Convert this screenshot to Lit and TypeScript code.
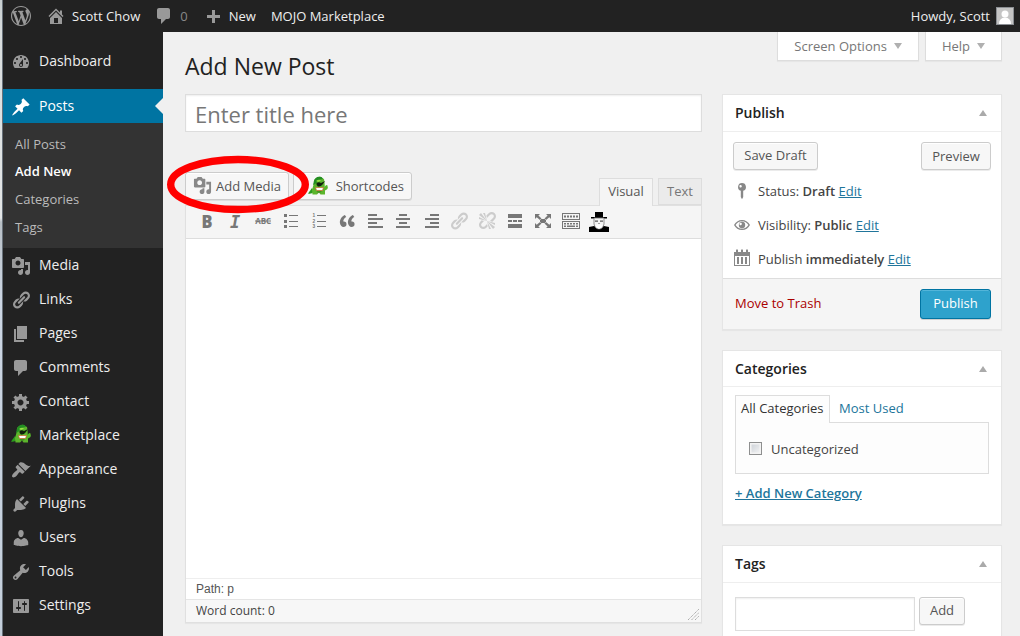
import { LitElement, html, css, svg } from "lit";
import { customElement, property } from "lit/decorators.js";

const paths: Record<string, string> = {
  wordpress: "M20 10c0-5.51-4.49-10-10-10C4.48 0 0 4.49 0 10c0 5.52 4.48 10 10 10 5.51 0 10-4.48 10-10zM7.78 15.37L4.37 6.22c.55-.02 1.17-.08 1.17-.08.5-.06.44-1.13-.06-1.11 0 0-1.45.11-2.37.11-.18 0-.37 0-.58-.01C4.12 2.69 6.87 1.11 10 1.11c2.33 0 4.45.87 6.05 2.34-.68-.11-1.65.39-1.65 1.58 0 .74.45 1.36.9 2.1.35.61.55 1.36.55 2.46 0 1.49-1.4 5-1.4 5l-3.03-8.37c.54-.02.82-.17.82-.17.5-.05.44-1.25-.06-1.22 0 0-1.44.12-2.38.12-.87 0-2.33-.12-2.33-.12-.5-.03-.56 1.2-.06 1.22l.92.08 1.26 3.41zM17.41 10c.24-.64.74-1.87.43-4.25.7 1.29 1.05 2.71 1.05 4.25 0 3.29-1.73 6.24-4.4 7.78.97-2.59 1.94-5.2 2.92-7.78zM6.1 18.09C3.12 16.65 1.11 13.53 1.11 10c0-1.3.23-2.48.72-3.59C3.25 10.3 4.67 14.2 6.1 18.09zm4.03-6.63l2.58 6.98c-.86.29-1.76.45-2.71.45-.79 0-1.57-.11-2.29-.33.81-2.38 1.62-4.74 2.42-7.1z",
  home: "M16 8.5l1.53 1.53-1.06 1.06L10 4.6l-6.47 6.49-1.06-1.06L10 2.5l4 4v-2h2v4zm-6-2.46l6 5.99V18H4v-5.97zM12 17v-5H8v5h4z",
  plus: "M17 9v3h-5v5H9v-5H4V9h5V4h3v5h5z",
  dashboard: "M3.76 16h12.48c1.1-1.37 1.76-3.11 1.76-5 0-4.42-3.58-8-8-8s-8 3.58-8 8c0 1.89.66 3.63 1.76 5zM10 4c.55 0 1 .45 1 1s-.45 1-1 1-1-.45-1-1 .45-1 1-1zM6 6c.55 0 1 .45 1 1s-.45 1-1 1-1-.45-1-1 .45-1 1-1zm8 0c.55 0 1 .45 1 1s-.45 1-1 1-1-.45-1-1 .45-1 1-1zm-5.37 5.55L12 7v6c0 1.1-.9 2-2 2s-2-.9-2-2c0-.57.24-1.08.63-1.45zM4 10c.55 0 1 .45 1 1s-.45 1-1 1-1-.45-1-1 .45-1 1-1zm12 0c.55 0 1 .45 1 1s-.45 1-1 1-1-.45-1-1 .45-1 1-1zm-5 3c0-.55-.45-1-1-1s-1 .45-1 1 .45 1 1 1 1-.45 1-1z",
  post: "M10.44 3.02l1.82-1.82 6.36 6.35-1.83 1.82c-1.05-.68-2.48-.57-3.41.36l-.75.75c-.92.93-1.04 2.35-.35 3.41l-1.83 1.82-2.41-2.41-2.8 2.79c-.42.42-3.38 2.71-3.8 2.29s1.86-3.39 2.28-3.81l2.79-2.79L4.1 9.36l1.83-1.82c1.05.69 2.48.57 3.4-.36l.75-.75c.93-.92 1.05-2.35.36-3.41z",
  media: "M13 11V4c0-.55-.45-1-1-1h-1.67L9 1H5L3.67 3H2c-.55 0-1 .45-1 1v7c0 .55.45 1 1 1h10c.55 0 1-.45 1-1zM7 4.5c1.38 0 2.5 1.12 2.5 2.5S8.38 9.5 7 9.5 4.5 8.38 4.5 7 5.62 4.5 7 4.5zM14 6h5v10.5c0 1.38-1.12 2.5-2.5 2.5S14 17.88 14 16.5s1.12-2.5 2.5-2.5c.17 0 .34.02.5.05V9h-3V6zm-4 8.05V13h2v3.5c0 1.38-1.12 2.5-2.5 2.5S7 17.88 7 16.5 8.12 14 9.5 14c.17 0 .34.02.5.05z",
  link: "M17.74 2.76c1.68 1.69 1.68 4.41 0 6.1l-1.53 1.52c-1.12 1.12-2.7 1.47-4.14 1.09l2.62-2.61.76-.77.76-.76c.84-.84.84-2.2 0-3.04-.84-.85-2.2-.85-3.04 0l-.77.76-3.38 3.38c-.37-1.44-.02-3.02 1.1-4.14l1.52-1.53c1.69-1.68 4.42-1.68 6.1 0zM8.59 13.43l5.34-5.34c.42-.42.42-1.1 0-1.52-.44-.43-1.13-.39-1.53 0l-5.33 5.34c-.42.42-.42 1.1 0 1.52.44.43 1.13.39 1.52 0zm-.76 2.29l4.14-4.15c.38 1.44.03 3.02-1.09 4.14l-1.52 1.53c-1.69 1.68-4.41 1.68-6.1 0-1.68-1.68-1.68-4.42 0-6.1l1.53-1.52c1.12-1.12 2.7-1.47 4.14-1.1l-4.14 4.15c-.85.84-.85 2.2 0 3.05.84.84 2.2.84 3.04 0z",
  page: "M6 15V2h10v13H6zm-1 1h8v2H3V5h2v11z",
  comment: "M5 2h9c1.1 0 2 .9 2 2v7c0 1.1-.9 2-2 2h-2l-5 5v-5H5c-1.1 0-2-.9-2-2V4c0-1.1.9-2 2-2z",
  generic: "M18 12h-2.18c-.17.7-.44 1.35-.81 1.93l1.54 1.54-2.1 2.1-1.54-1.54c-.58.36-1.23.63-1.91.79V19H8v-2.18c-.68-.16-1.33-.43-1.91-.79l-1.54 1.54-2.12-2.12 1.54-1.54c-.36-.58-.63-1.23-.79-1.91H1V9.03h2.17c.16-.7.44-1.35.8-1.94L2.43 5.55l2.1-2.1 1.54 1.54c.58-.37 1.24-.64 1.93-.81V2h3v2.18c.68.16 1.33.43 1.91.79l1.54-1.54 2.12 2.12-1.54 1.54c.36.59.64 1.24.8 1.94H18V12zm-8.5 1.5c1.66 0 3-1.34 3-3s-1.34-3-3-3-3 1.34-3 3 1.34 3 3 3z",
  appearance: "M14.48 11.06L7.41 3.99l1.5-1.5c.5-.56 2.3-.47 3.51.32 1.21.8 1.43 1.28 2.91 2.1 1.18.64 2.45 1.26 4.45.85zm-.71.71L6.7 4.7 4.93 6.47c-.39.39-.39 1.02 0 1.41l1.06 1.06c.39.39.39 1.03 0 1.42-.6.6-1.43 1.11-2.21 1.69-.35.26-.7.53-1.01.84C1.43 14.23.4 16.08 1.4 17.07c.99 1 2.84-.03 4.18-1.36.31-.31.58-.66.85-1.02.57-.78 1.08-1.61 1.69-2.21.39-.39 1.02-.39 1.41 0l1.06 1.06c.39.39 1.02.39 1.41 0z",
  plugins: "M13.11 4.36L9.87 7.6 8 5.73l3.24-3.24c.35-.34 1.05-.2 1.56.32.52.51.66 1.21.31 1.55zm-8 1.77l.91-1.12 9.01 9.01-1.19.84c-.71.71-2.63 1.16-3.82 1.16H6.14L4.9 17.26c-.59.59-1.54.59-2.12 0-.59-.58-.59-1.53 0-2.12l1.24-1.24v-3.88c0-1.13.4-3.19 1.09-3.89zm7.26 3.97l3.24-3.24c.34-.35 1.04-.21 1.55.31.52.51.66 1.21.31 1.55l-3.24 3.25z",
  users: "M10 9.25c-2.27 0-2.73-3.44-2.73-3.44C7 4.02 7.82 2 9.97 2c2.16 0 2.98 2.02 2.71 3.81 0 0-.41 3.44-2.68 3.44zm0 2.57L12.72 10c2.39 0 4.52 2.33 4.52 4.53v2.49s-3.65 1.13-7.24 1.13c-3.65 0-7.24-1.13-7.24-1.13v-2.49c0-2.25 1.94-4.48 4.47-4.48z",
  tools: "M16.68 9.77c-1.34 1.34-3.3 1.67-4.95.99l-5.41 6.52c-.99.99-2.59.99-3.58 0s-.99-2.59 0-3.57l6.52-5.42c-.68-1.65-.35-3.61.99-4.95 1.28-1.28 3.12-1.62 4.72-1.06l-2.89 2.89 2.82 2.82 2.86-2.87c.53 1.58.18 3.39-1.08 4.65zM3.81 16.21c.4.39 1.04.39 1.43 0 .4-.4.4-1.04 0-1.43-.39-.4-1.03-.4-1.43 0-.39.39-.39 1.03 0 1.43z",
  settings: "M18 16V4c0-.55-.45-1-1-1H3c-.55 0-1 .45-1 1v12c0 .55.45 1 1 1h14c.55 0 1-.45 1-1zM8 11h1c.55 0 1 .45 1 1s-.45 1-1 1H8v1.5c0 .28-.22.5-.5.5s-.5-.22-.5-.5V13H6c-.55 0-1-.45-1-1s.45-1 1-1h1V5.5c0-.28.22-.5.5-.5s.5.22.5.5V11zm5-2h-1c-.55 0-1-.45-1-1s.45-1 1-1h1V5.5c0-.28.22-.5.5-.5s.5.22.5.5V7h1c.55 0 1 .45 1 1s-.45 1-1 1h-1v5.5c0 .28-.22.5-.5.5s-.5-.22-.5-.5V9z",
  quote: "M9.49 13.22c0-.74-.2-1.38-.61-1.9-.62-.78-1.83-.88-2.53-.72-.29-1.65 1.11-3.75 2.92-4.65L7.88 4c-2.73 1.3-5.42 4.28-4.96 8.05C3.21 14.43 4.59 16 6.54 16c.85 0 1.56-.25 2.12-.75s.83-1.18.83-2.03zm8.05 0c0-.74-.2-1.38-.61-1.9-.63-.78-1.83-.88-2.53-.72-.29-1.65 1.11-3.75 2.92-4.65L15.93 4c-2.73 1.3-5.41 4.28-4.95 8.05.29 2.38 1.66 3.95 3.61 3.95.85 0 1.56-.25 2.12-.75s.83-1.18.83-2.03z",
  unlink: "M17.74 2.26c1.68 1.69 1.68 4.41 0 6.1l-1.53 1.52c-.32.33-.69.58-1.08.77L13 10l1.69-1.64.76-.77.76-.76c.84-.84.84-2.2 0-3.04-.84-.85-2.2-.85-3.04 0l-.77.76-.76.76L10 7l-.65-2.14c.19-.38.44-.75.77-1.07l1.52-1.53c1.69-1.68 4.42-1.68 6.1 0zM2 4l8 6-6-8zm4-2l4 8-2-8H6zM2 6l8 4-8-2V6zm7.36 7.69L10 13l.74 2.35-1.38 1.39c-1.69 1.68-4.41 1.68-6.1 0-1.68-1.68-1.68-4.42 0-6.1l1.39-1.38L7 10l-.69.64-1.52 1.53c-.85.84-.85 2.2 0 3.04.84.85 2.2.85 3.04 0zM18 16l-8-6 6 8zm-4 2l-4-8 2 8h2zm4-4l-8-4 8 2v2z",
  bullets: "M3 3h3v3H3zM8 4h9v1H8zM3 9h3v3H3zM8 10h9v1H8zM3 14h3v3H3zM8 15h9v1H8z",
  left: "M3 3h9v2H3zM3 7h15v2H3zM3 11h9v2H3zM3 15h15v2H3z",
  center: "M6 3h8v2H6zM3 7h14v2H3zM6 11h8v2H6zM3 15h14v2H3z",
  right: "M9 3h9v2H9zM4 7h14v2H4zM9 11h9v2H9zM4 15h14v2H4z",
  more: "M3 3h14v4H3zM3 9h4v2H3zM8 9h4v2H8zM13 9h4v2h-4zM3 13h14v4H3z",
  expand: "M7 8h6v4H7zM2 3h5L5.400 4.600 8.500 7.500 7 9 3.700 6.200 2 8zM18 3h-5l1.600 1.600L11.500 7.500 13 9l3.300-2.800L18 8zM2 17h5l-1.600-1.600 3.100-2.900L7 11l-3.300 2.800L2 12zM18 17h-5l1.600-1.600-3.100-2.900L13 11l3.300 2.800L18 12z",
  pin: "M10 2a4 4 0 0 1 1.2 7.8V16L10 18.3 8.8 16V9.8A4 4 0 0 1 10 2zM8.9 4.1a1.2 1.2 0 1 0 .1 2.3 1.2 1.2 0 0 0-.1-2.3z",
  eye: "M10 4.900c3.500 0 6.500 2 8 5.100-1.500 3.100-4.500 5.100-8 5.100S3.500 13.100 2 10c1.500-3.100 4.500-5.100 8-5.100zm0 1.300c-2.700 0-5 1.400-6.400 3.800 1.400 2.400 3.700 3.800 6.400 3.800s5-1.400 6.400-3.800C15 7.600 12.700 6.200 10 6.200zM10 6.800a3.200 3.200 0 1 1 0 6.400 3.200 3.200 0 0 1 0-6.400zm-.9 1a1.200 1.200 0 1 0 .1 2.200 1.200 1.200 0 0 0-.1-2.200z",
  calendar: "M2 4h2V2q1-1.500 2 0v2h3V2q1-1.500 2 0v2h3V2q1-1.500 2 0v2h2v14H2zm1 4v9h14V8zM5 9h2v7H5zM9 9h2v7H9zM13 9h2v7h-2z",
};

const dino = svg`
  <path d="M4 12L0 17.500Q3 18.500 6 16Z" fill="#2c9a1d"/>
  <path d="M16 12Q18 8 19.500 9.500 21 14 15 15Z" fill="#57b82a"/>
  <path d="M6 7Q5 3 9 2 12-.5 14 2L16 3 16.500 6 17 14 17 18.500H12.500L11 16.500 9 18.500H4.500L4 14Z" fill="#5cb52c"/>
  <path d="M6 5Q7 1 11 .8 14 0 15 3L12 3.500 7 8 5 9Z" fill="#238e22"/>
  <path d="M8 5Q11 3 13 4.500L10 6Z" fill="#9be046"/>
  <path d="M8.500 7Q11 5.500 13 7L17 5 14.500 8.500Q13 11 10 10.500 8 9 8.500 7Z" fill="#10200c"/>
  <path d="M7.500 11.500H15.500L14.500 14.500H8.500Z" fill="#fff" stroke="#c9622a" stroke-width=".7"/>
  <path d="M8.500 15.500H14L12 16.500H10Z" fill="#2c7318"/>`;

@customElement("wp-icon")
export class WpIcon extends LitElement {
  @property() name = "";
  static styles = css`
    :host { display: block; flex: none; width: 20px; height: 20px; }
    svg { display: block; width: 100%; height: 100%; fill: currentColor; overflow: visible; }
    .abc { font: 700 8px "Open Sans", sans-serif; }
    .num { font: 700 4.800px "Liberation Sans", sans-serif; }
    .bold { font: 800 17px "Open Sans", sans-serif; }
    .ital { font: italic 700 17px "DejaVu Sans Mono", monospace; }
  `;
  shape() {
    switch (this.name) {
      case "dino": return dino;
      case "bold": return svg`<text class="bold" x="4.500" y="16.500" textLength="11" lengthAdjust="spacingAndGlyphs">B</text>`;
      case "italic": return svg`<text class="ital" x="5" y="16.500">I</text>`;
      case "strike": return svg`<text class="abc" x="2.200" y="13" textLength="16">ABC</text><path d="M2 9.500h16v1H2z"/>`;
      case "numbers": return svg`<path d="M8 4h9v1H8zM8 10h9v1H8zM8 15h9v1H8z"/><text class="num" x="3.500" y="6">1</text><text class="num" x="3.500" y="11.700">2</text><text class="num" x="3.500" y="17.400">3</text>`;
      case "keyboard": return svg`<path fill-rule="evenodd" d="M1 2h18v7H1zM2 3v5h16V3zM1 10h18v8H1zM2 11v6h16v-6z"/><path d="M3 4.500h2v2H3zM6 4.500h2v2H6zM9 4.500h2v2H9zM12 4.500h2v2h-2zM15 4.500h2v2h-2zM3 12h2v1.500H3zM6 12h2v1.500H6zM9 12h2v1.500H9zM12 12h2v1.500h-2zM15 12h2v1.500h-2zM3 14.500h2V16H3zM6 14.500h8V16H6zM15 14.500h2V16h-2z"/>`;
      case "hat": return svg`<g fill="#000"><path d="M6 1h8v5h4v1.500H2V6h4zM0 16l5-1h10l5 1v5H0z"/><path d="M5 7h10v6q-1 5-5 5t-5-5z" fill="#f4f4f4" stroke="#777" stroke-width=".8"/><path d="M6 9.500h3v1.200H6zM11 9.500h3v1.200h-3zM9 12.500h2v.8H9z" fill="#555"/><path d="M7 14q3-2 6 0v2l-3 2-3-2z" fill="#fff"/></g>`;
      default: return svg`<path fill-rule="evenodd" d=${paths[this.name] ?? ""}/>`;
    }
  }
  render() { return html`<svg viewBox="0 0 20 20">${this.shape()}</svg>`; }
}

@customElement("app-root")
export class AppRoot extends LitElement {
  static styles = css`
    :host { display: block; width: 1020px; height: 636px; overflow: hidden; font: 13px/18px "Open Sans", sans-serif; color: #444; background: #f0f0f0; }
    * { box-sizing: border-box; }
    .frame { display: grid; grid-template: 32px 604px / 3px 160px 857px; height: 636px; position: relative; }
    .edge { grid-row: 1 / 3; background: linear-gradient(#c6cdcf 0, #d9dddd 32px, #e3e6e6 218px, #b8bfc5 222px, #ccd6e3 300px, #c4cfdb 100%); border-right: 1px solid #68717a; }
    .bar { grid-column: 2 / 4; background: #222; color: #eee; display: flex; align-items: center; padding: 0 6px 0 8px; white-space: nowrap; }
    .bar wp-icon { color: #999; }
    .bar .site { margin: 0 14px 0 6px; letter-spacing: .04px; }
    .bar .home { margin-left: 15px; }
    .bar .count { margin: 0 15px 0 6px; color: #888; }
    .bar .new { margin: 0 15px 0 6px; }
    .bar .grow { flex: 1; }
    .avatar { width: 18px; height: 18px; margin-left: 6px; background: #c5c5c5; border: 1px solid #8c8f94; }
    .side { background: #222; padding-top: 12px; font-size: 14px; color: #eee; }
    .item { height: 34px; display: flex; align-items: center; gap: 8px; padding-left: 8px; }
    .item wp-icon { color: #999; margin-top: 2px; }
    .item span { padding-bottom: 1px; }
    .item.current { margin-top: 11px; background: #0074a2; color: #fff; position: relative; }
    .item.current wp-icon { color: #fff; }
    .item.current::after { content: ""; position: absolute; right: 0; top: 9px; border: 8px solid transparent; border-right-color: #f0f0f0; border-left: 0; }
    .item wp-icon[name="dino"] { margin-top: -2px; }
    .sub { background: #333; height: 125px; padding: 7px 0 0 12px; font-size: 13px; line-height: 28px; color: #bbb; }
    .sub b { color: #fff; font-weight: 600; }
    .sub div { height: 28px; }
    .sub div:nth-child(2) { line-height: 26px; }
    .sub div:nth-child(3), .sub div:nth-child(4) { line-height: 27px; }
    .main { display: grid; grid-template-columns: 517px 280px; column-gap: 20px; padding-left: 22px; grid-template-rows: 62px 542px; }
    h1 { margin: 0; font: 400 23px/30px "Open Sans", sans-serif; color: #222; padding-top: 19px; }
    .screen { display: flex; justify-content: flex-end; gap: 6px; color: #777; margin-left: -30px; }
    .screen div { height: 29px; background: #fff; border: 1px solid #ddd; border-top: 0; display: flex; align-items: center; padding: 0 16px 0 16px; gap: 7px; box-shadow: 0 1px 1px rgba(0,0,0,.04); }
    .down { border: 4.500px solid transparent; border-top: 6px solid #b0b0b0; border-bottom: 0; }
    .title { height: 38px; border: 1px solid #ddd; background: #fff; box-shadow: inset 0 1px 2px rgba(0,0,0,.07); font-size: 22px; line-height: 39px; padding-left: 9px; color: #777; }
    .tools { height: 73px; display: flex; align-items: flex-end; padding-top: 40px; }
    .btn { height: 28px; border: 1px solid #ccc; border-radius: 3px; background: #f7f7f7; color: #555; box-shadow: inset 0 1px 0 #fff, 0 1px 0 rgba(0,0,0,.08); display: flex; align-items: center; justify-content: center; padding-bottom: 1px; }
    .tools .btn { align-self: flex-start; }
    .add { width: 104px; gap: 4px; padding-left: 0; }
    .add wp-icon { color: #888; width: 19px; height: 19px; }
    .short { width: 119px; margin-left: 4px; padding-right: 7px; gap: 7px; justify-content: flex-end; }
    .short wp-icon { margin-right: 1px; }
    .tab { height: 27px; border: 1px solid #ddd; background: #ebebeb; color: #777; line-height: 25px; text-align: center; width: 44px; margin-left: 5px; }
    .tab.on { width: 54px; height: 28px; margin-left: auto; margin-bottom: -1px; background: #f5f5f5; border-bottom: 0; color: #555; z-index: 1; }
    .editor { height: 418px; border: 1px solid #e0e0e0; background: #fff; display: grid; grid-template-rows: 33px 339px 21px 23px; box-shadow: 0 1px 1px rgba(0,0,0,.04); }
    .bar2 { background: #f5f5f5; border-bottom: 1px solid #ddd; display: flex; gap: 8px; padding: 5px 0 0 11px; color: #777; }
    .bar2 .off { color: #ccc; }
    .path { border-top: 1px solid #eee; padding-left: 10px; font: 12px/20px "Liberation Sans", sans-serif; color: #555; }
    .words { border-top: 1px solid #e5e5e5; background: #f7f7f7; padding: 0 2px 0 10px; font-size: 12px; line-height: 21px; display: flex; justify-content: space-between; align-items: flex-start; }
    .words svg { margin-top: 9px; display: block; }
    .col { display: flex; flex-direction: column; gap: 20px; }
    .box { border: 1px solid #e5e5e5; background: #fff; box-shadow: 0 1px 1px rgba(0,0,0,.04); flex: none; }
    h3 { margin: 0; height: 37px; border-bottom: 1px solid #eee; font: 600 14px/36px "Open Sans", sans-serif; color: #222; padding: 0 14px 0 12px; display: flex; justify-content: space-between; align-items: center; }
    h3::after { content: ""; border: 4.500px solid transparent; border-bottom: 6px solid #aaa; border-top: 0; }
    .pub { height: 236px; }
    .cat { height: 175px; }
    .cat h3 { height: 36px; line-height: 34px; }
    .tag { height: 120px; }
    .row { display: flex; justify-content: space-between; padding: 10px 10px 0; }
    .save { width: 85px; padding-bottom: 3px; }
    .prev { width: 70px; }
    .misc { height: 34px; display: flex; align-items: center; gap: 6px; padding-left: 9px; white-space: nowrap; }
    .misc wp-icon { color: #888; }
    .misc wp-icon[name="calendar"] { margin-top: -3px; }
    .misc b { font-weight: 600; }
    .list { padding-top: 4px; height: 108px; }
    a { color: #21759b; text-decoration: underline; }
    .foot { height: 51px; background: #f5f5f5; border-top: 1px solid #ddd; display: flex; justify-content: space-between; padding: 10px 10px 0 12px; color: #a00; }
    .foot span { padding-top: 5px; }
    .primary { width: 71px; height: 30px; background: #2ea2cc; border: 1px solid #0074a2; border-radius: 3px; color: #fff; line-height: 27px; text-align: center; box-shadow: inset 0 1px 0 rgba(120,200,230,.5), 0 1px 0 rgba(0,0,0,.15); }
    .cats { padding: 8px 12px 0; }
    .tabs { display: flex; height: 28px; position: relative; }
    .tabs span { width: 95px; background: #fdfdfd; border: 1px solid #ddd; border-bottom: 0; color: #333; line-height: 25px; padding-left: 5px; white-space: nowrap; }
    .tabs a { text-decoration: none; padding-left: 9px; line-height: 27px; }
    .panel { height: 52px; margin-top: -1px; border: 1px solid #ddd; background: #fdfdfd; display: flex; align-items: center; gap: 9px; padding-left: 13px; padding-top: 1px; }
    .check { width: 13px; height: 13px; border: 1px solid #8e8f8f; background: linear-gradient(135deg, #cacfd5, #f6f6f6); box-shadow: inset 0 0 0 1.500px #f3f3f3; }
    .addcat { font-weight: 600; display: block; margin-top: 10px; }
    .tagrow { display: flex; gap: 4px; padding: 14px 12px 0; }
    .field { width: 180px; height: 34px; border: 1px solid #ddd; box-shadow: inset 0 1px 2px rgba(0,0,0,.07); }
    .addtag { width: 46px; padding-bottom: 2px; }
    .ring { position: absolute; left: 166px; top: 155px; }
  `;
  menu = [["media", "Media"], ["link", "Links"], ["page", "Pages"], ["comment", "Comments"], ["generic", "Contact"], ["dino", "Marketplace"], ["appearance", "Appearance"], ["plugins", "Plugins"], ["users", "Users"], ["tools", "Tools"], ["settings", "Settings"]];
  buttons = ["bold", "italic", "strike", "bullets", "numbers", "quote", "left", "center", "right", "link", "unlink", "more", "expand", "keyboard", "hat"];
  render() {
    return html`<div class="frame">
      <div class="edge"></div>
      <header class="bar">
        <wp-icon name="wordpress"></wp-icon>
        <wp-icon class="home" name="home"></wp-icon><span class="site">Scott Chow</span>
        <wp-icon name="comment"></wp-icon><span class="count">0</span>
        <wp-icon name="plus"></wp-icon><span class="new">New</span>
        <span class="mojo">MOJO Marketplace</span><span class="grow"></span>
        <span class="howdy">Howdy, Scott</span>
        <svg class="avatar" viewBox="0 0 16 16"><circle cx="8" cy="6" r="3.500" fill="#fff"/><path d="M2 16q0-6 6-6.500 6 .5 6 6.500z" fill="#fff"/></svg>
      </header>
      <nav class="side">
        <div class="item"><wp-icon name="dashboard"></wp-icon><span>Dashboard</span></div>
        <div class="item current"><wp-icon name="post"></wp-icon><span>Posts</span></div>
        <div class="sub"><div>All Posts</div><div><b>Add New</b></div><div>Categories</div><div>Tags</div></div>
        ${this.menu.map(([i, t]) => html`<div class="item"><wp-icon name=${i}></wp-icon><span>${t}</span></div>`)}
      </nav>
      <main class="main">
        <h1>Add New Post</h1>
        <div class="screen"><div>Screen Options<i class="down"></i></div><div>Help<i class="down"></i></div></div>
        <section>
          <div class="title">Enter title here</div>
          <div class="tools">
            <div class="btn add"><wp-icon name="media"></wp-icon>Add Media</div>
            <div class="btn short"><wp-icon name="dino"></wp-icon>Shortcodes</div>
            <div class="tab on">Visual</div><div class="tab">Text</div>
          </div>
          <div class="editor">
            <div class="bar2">${this.buttons.map((b) => html`<wp-icon class=${b.endsWith("link") ? "off" : ""} name=${b}></wp-icon>`)}</div>
            <div></div>
            <div class="path">Path: p</div>
            <div class="words">Word count: 0<svg width="11" height="11"><path d="M0 11L11 0M3.500 11L11 3.500M7 11l4-4" stroke="#aaa" fill="none" stroke-dasharray="1.400 .6"/></svg></div>
          </div>
        </section>
        <aside class="col">
          <div class="box pub"><h3>Publish</h3>
            <div class="row"><div class="btn save">Save Draft</div><div class="btn prev">Preview</div></div>
            <div class="list">
              <div class="misc"><wp-icon name="pin"></wp-icon><span>Status: <b>Draft</b> <a>Edit</a></span></div>
              <div class="misc"><wp-icon name="eye"></wp-icon><span>Visibility: <b>Public</b> <a>Edit</a></span></div>
              <div class="misc"><wp-icon name="calendar"></wp-icon><span>Publish <b>immediately</b> <a>Edit</a></span></div>
            </div>
            <div class="foot"><span>Move to Trash</span><div class="primary">Publish</div></div>
          </div>
          <div class="box cat"><h3>Categories</h3>
            <div class="cats"><div class="tabs"><span>All Categories</span><a>Most Used</a></div>
              <div class="panel"><i class="check"></i>Uncategorized</div>
              <a class="addcat">+ Add New Category</a></div>
          </div>
          <div class="box tag"><h3>Tags</h3>
            <div class="tagrow"><div class="field"></div><div class="btn addtag">Add</div></div></div>
        </aside>
      </main>
      <svg class="ring" width="144" height="60"><ellipse cx="72" cy="29.500" rx="67.300" ry="25" fill="none" stroke="#f00" stroke-width="7.400"/></svg>
    </div>`;
  }
}
